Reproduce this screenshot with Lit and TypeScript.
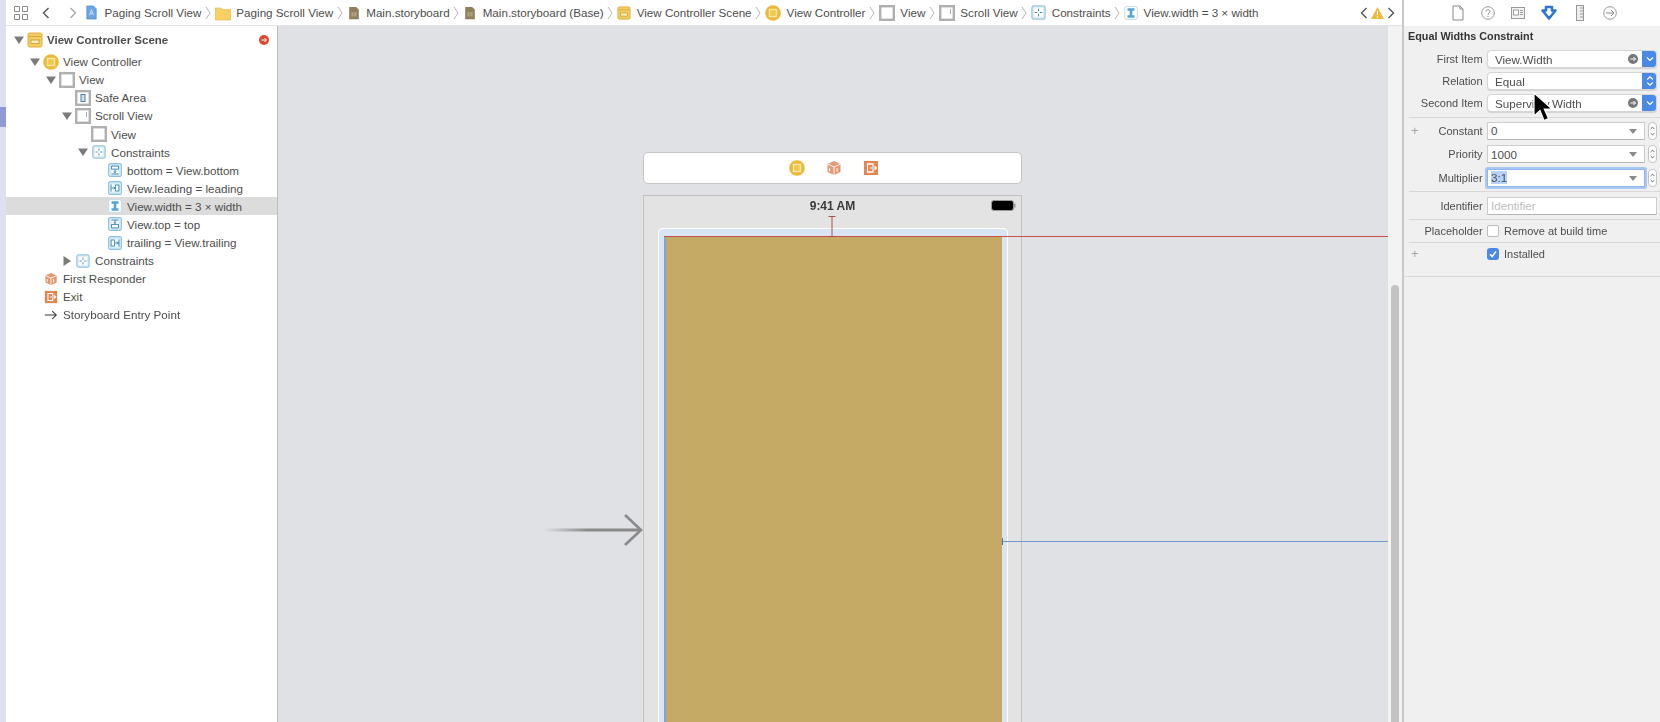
import { LitElement, html, css, svg, nothing } from "lit";
import { customElement } from "lit/decorators.js";

type IconName =
  | "view" | "scroll" | "safe" | "constraints" | "scene" | "vc" | "cube" | "exit" | "entry"
  | "cbottom" | "cleading" | "cwidth" | "ctop" | "ctrailing" | "doc" | "folder" | "story";

const iconBody = (name: IconName) => {
  switch (name) {
    case "view":
      return svg`<rect x="1.2" y="1.2" width="13.6" height="13.6" fill="#fff" stroke="#b0b0b0" stroke-width="2.4"/>`;
    case "scroll":
      return svg`<rect x="1.2" y="1.2" width="13.6" height="13.6" fill="#fff" stroke="#b0b0b0" stroke-width="2.4"/><path d="M11.5 4v5" stroke="#aaa" stroke-width="1"/>`;
    case "safe":
      return svg`<rect x="1.2" y="1.2" width="13.6" height="13.6" fill="#fff" stroke="#b0b0b0" stroke-width="2.4"/><rect x="6" y="4.5" width="4" height="7" fill="#cfe0ee" stroke="#4f7ea6"/>`;
    case "constraints":
      return svg`<rect x="1" y="1" width="14" height="14" rx="2" fill="#e0f0f8" stroke="#9cc6dc" stroke-width="1.4"/><rect x="3.5" y="3.5" width="9" height="9" fill="#fff"/><path d="M8 4v2.5M8 9.5V12M4 8h2.5M9.5 8H12" stroke="#2f7fb0"/>`;
    case "scene":
      return svg`<rect x="1" y="1" width="14" height="14" rx="1.5" fill="#f1cd62" stroke="#dfae3d"/><path d="M1.5 4.5h13" stroke="#d8ab3c"/><rect x="4" y="8" width="8" height="3.5" fill="#fbeeb8" stroke="#c49a35" stroke-width=".8"/>`;
    case "vc":
      return svg`<circle cx="8" cy="8" r="7.8" fill="#edb93a"/><rect x="4.5" y="4.5" width="7" height="7" fill="#f3c84f" stroke="#fde9a8" stroke-width="1.4"/>`;
    case "cube":
      return svg`<path d="M8 1l6.5 3v8L8 15l-6.5-3V4z" fill="#e29a76"/><path d="M1.5 4L8 7l6.5-3M8 7v8" fill="none" stroke="#fff" stroke-width=".9"/><path d="M3.6 8.2v3M11 8.2v3.6" stroke="#fff" stroke-width="1.1"/>`;
    case "exit":
      return svg`<rect x="1" y="1" width="14" height="14" fill="#e28550"/><path d="M10 6.8V4H4.5v8H10V9.2" fill="none" stroke="#fff" stroke-width="1.3"/><path d="M7 8h6.5M11.5 6l2 2-2 2" fill="none" stroke="#fff" stroke-width="1.2"/>`;
    case "entry":
      return svg`<path d="M1 8h13M9.5 3.5L14 8l-4.5 4.5" fill="none" stroke="#333" stroke-width="1.2"/>`;
    case "cbottom":
      return svg`${chip()}<rect x="4" y="3.5" width="8" height="9" fill="#fff"/><path d="M4 3.5h8v3.5H4zM8 7v4M6.4 9.5L8 11l1.6-1.5M4 12.5h8" fill="none" stroke="#2f7fb0"/>`;
    case "cleading":
      return svg`${chip()}<rect x="3.5" y="4" width="9" height="8" fill="#fff"/><path d="M3.5 4v8M8.5 4.5h4v7h-4zM4 8h4M6.5 6.4L8 8l-1.5 1.6" fill="none" stroke="#2f7fb0"/>`;
    case "cwidth":
      return svg`<rect x=".7" y=".7" width="14.6" height="14.6" rx="2.5" fill="#fff" stroke="#bcd8e6"/><path d="M4 2.5h8v3H9.5v5H12v3H4v-3h2.5v-5H4z" fill="#57a6d2"/>`;
    case "ctop":
      return svg`${chip()}<rect x="4" y="3.5" width="8" height="9" fill="#fff"/><path d="M4 3.5h8M8 3.5v4M6.4 6L8 7.5 9.6 6M4 8.5h8v4H4z" fill="none" stroke="#2f7fb0"/>`;
    case "ctrailing":
      return svg`${chip()}<rect x="3.5" y="4" width="9" height="8" fill="#fff"/><path d="M12.5 4v8M3.5 4.5h4v7h-4zM8 8h4M9.9 6.4L12 8l-2.1 1.6" fill="none" stroke="#2f7fb0"/>`;
    case "doc":
      return svg`<path d="M3 1h7l3 3v11H3z" fill="#6ba6e4" stroke="#4a86c8" stroke-width=".7"/><path d="M6 11l2-6 2 6M6.8 9h2.4" fill="none" stroke="#dceeff" stroke-width=".8"/>`;
    case "folder":
      return svg`<path d="M0 3h6l1.5 1.5H16V15H0z" fill="#f7cf62" stroke="#e5b94a" stroke-width=".6"/>`;
    case "story":
      return svg`<path d="M2.5 1h8l3 3v11h-11z" fill="#8f7f5c"/><rect x="5" y="7" width="6" height="5" fill="#b2a585"/><path d="M8 7v5" stroke="#8f7f5c"/>`;
  }
};

const chip = () =>
  svg`<rect x=".7" y=".7" width="14.6" height="14.6" rx="2" fill="#d5ebf6" stroke="#8fc0da" stroke-width="1.2"/>`;

const icon = (name: IconName, size = 14) =>
  html`<svg width=${size} height=${size} viewBox="0 0 16 16">${iconBody(name)}</svg>`;

const crumbs: { icon: IconName; label: string; size?: number }[] = [
  { icon: "doc", label: "Paging Scroll View", size: 15 },
  { icon: "folder", label: "Paging Scroll View", size: 16 },
  { icon: "story", label: "Main.storyboard", size: 14 },
  { icon: "story", label: "Main.storyboard (Base)", size: 14 },
  { icon: "scene", label: "View Controller Scene", size: 14 },
  { icon: "vc", label: "View Controller", size: 16 },
  { icon: "view", label: "View", size: 16 },
  { icon: "scroll", label: "Scroll View", size: 16 },
  { icon: "constraints", label: "Constraints", size: 15 },
  { icon: "cwidth", label: "View.width = 3 × width", size: 14 },
];

const tree: { d: number; icon: IconName; label: string; tri?: "open" | "closed"; sel?: boolean; size?: number }[] = [
  { d: 1, icon: "vc", label: "View Controller", tri: "open", size: 16 },
  { d: 2, icon: "view", label: "View", tri: "open", size: 16 },
  { d: 3, icon: "safe", label: "Safe Area", size: 16 },
  { d: 3, icon: "scroll", label: "Scroll View", tri: "open", size: 16 },
  { d: 4, icon: "view", label: "View", size: 16 },
  { d: 4, icon: "constraints", label: "Constraints", tri: "open" },
  { d: 5, icon: "cbottom", label: "bottom = View.bottom" },
  { d: 5, icon: "cleading", label: "View.leading = leading" },
  { d: 5, icon: "cwidth", label: "View.width = 3 × width", sel: true },
  { d: 5, icon: "ctop", label: "View.top = top" },
  { d: 5, icon: "ctrailing", label: "trailing = View.trailing" },
  { d: 3, icon: "constraints", label: "Constraints", tri: "closed" },
  { d: 1, icon: "cube", label: "First Responder" },
  { d: 1, icon: "exit", label: "Exit" },
  { d: 1, icon: "entry", label: "Storyboard Entry Point" },
];

const tri = (kind?: "open" | "closed") => {
  if (!kind) return html`<span class="tri"></span>`;
  return html`<svg class="tri" width="10" height="10" viewBox="0 0 10 10">
    <path d=${kind === "open" ? "M0 1.5h10L5 9z" : "M1.5 0v10L9 5z"} fill="#7b7b7b"/>
  </svg>`;
};

const chevron = html`<svg class="crumb-sep" width="6" height="14" viewBox="0 0 6 14">
  <path d="M1 1l4 6-4 6" fill="none" stroke="#b5b5b5"/>
</svg>`;

@customElement("app-root")
export class AppRoot extends LitElement {
  static styles = css`
    :host {
      display: block;
      width: 1660px;
      height: 722px;
      overflow: hidden;
      position: relative;
      background: #fff;
      font-family: "Liberation Sans", Arial, sans-serif;
      font-size: 11.65px;
      color: #4d4d4d;
    }
    .app {
      display: flex;
      height: 722px;
      filter: blur(0.45px);
    }
    .strip {
      width: 6px;
      flex: none;
      background: #dfe0ef;
    }
    .strip div {
      margin-top: 107px;
      height: 20px;
      background: #8e9bd6;
    }
    .main {
      width: 1397px;
      flex: none;
      display: flex;
      flex-direction: column;
    }
    .crumbs {
      height: 25px;
      flex: none;
      display: flex;
      align-items: center;
      background: #fff;
      border-bottom: 1px solid #e2e2e2;
      white-space: nowrap;
    }
    .grid-btn {
      margin-left: 8px;
    }
    .nav {
      display: block;
    }
    .nav.back {
      margin-left: 14px;
    }
    .nav.fwd {
      margin-left: 19px;
      margin-right: 7px;
    }
    .crumb {
      display: flex;
      align-items: center;
      gap: 5.5px;
    }
    .crumb-sep {
      margin: 0 3.75px;
      flex: none;
    }
    .issues {
      margin-left: auto;
      margin-right: 8px;
      display: flex;
      align-items: center;
      gap: 3px;
    }
    .body {
      flex: 1;
      display: flex;
      min-height: 0;
    }
    .outline {
      width: 271px;
      flex: none;
      background: #fff;
      border-right: 1px solid #bdbdbd;
      padding-top: 5px;
      box-sizing: content-box;
    }
    .scene-row {
      height: 18px;
      margin-bottom: 3.6px;
      font-weight: bold;
      font-size: 11.5px;
      display: flex;
      align-items: center;
      position: relative;
      padding-right: 8px;
    }
    .row {
      height: 18.1px;
      display: flex;
      align-items: center;
    }
    .row.sel {
      background: #dcdcdc;
    }
    .tri {
      width: 10px;
      flex: none;
      margin-right: 3px;
    }
    .row svg:not(.tri),
    .scene-row svg:not(.tri) {
      flex: none;
    }
    .ico {
      width: 16px;
      flex: none;
      display: flex;
      justify-content: center;
      margin-right: 4px;
    }
    .stop {
      margin-left: auto;
    }
    .canvas {
      flex: 1;
      position: relative;
      overflow: hidden;
      background: #e0e1e5;
      padding: 126px 0 0 365px;
    }
    .dock {
      width: 375px;
      height: 30px;
      padding-left: 2px;
      background: #fff;
      border: 1px solid #c5c5c5;
      border-radius: 5px;
      display: flex;
      align-items: center;
      justify-content: center;
      gap: 21px;
    }
    .phone {
      margin-top: 11px;
      width: 349px;
      height: 600px;
      background: #e3e3e3;
      border: 1px solid #c2c2c2;
      padding: 0 14px;
      box-sizing: content-box;
    }
    .status {
      height: 32px;
      display: flex;
      align-items: center;
      justify-content: center;
      font-weight: bold;
      font-size: 12px;
      color: #3a3a3a;
      position: relative;
      padding-bottom: 12px;
      box-sizing: border-box;
    }
    .battery {
      position: absolute;
      right: -9px;
      top: 4px;
    }
    .frame {
      width: 350px;
      background: #fff;
      border-radius: 5px 5px 0 0;
      padding: 1px 1px 0 1px;
      box-sizing: border-box;
      height: 560px;
    }
    .tint {
      background: #d9e5f5;
      height: 100%;
      padding: 7px 5px 0 5px;
      box-sizing: border-box;
      border-radius: 4px 4px 0 0;
    }
    .gold {
      height: 100%;
      background: #c4aa65;
      border-left: 2px solid #7ea5d6;
    }
    .arrow,
    .red-line,
    .blue-line,
    .ibeam {
      position: absolute;
    }
    .arrow {
      left: 266px;
      top: 487px;
    }
    .red-line {
      left: 386px;
      right: 0;
      top: 210px;
      height: 1px;
      background: #c8504a;
    }
    .blue-line {
      left: 724px;
      right: 0;
      top: 515px;
      height: 1px;
      background: #6f97c9;
    }
    .blue-line::before {
      content: "";
      position: absolute;
      left: 0;
      top: -3px;
      width: 1px;
      height: 7px;
      background: #56708f;
    }
    .ibeam {
      left: 550px;
      top: 190px;
    }
    .gutter {
      width: 15px;
      flex: none;
      background: #f3f3f3;
      padding: 259px 4px 0 3px;
      box-sizing: border-box;
    }
    .thumb {
      height: 100%;
      background: #c3c3c3;
      border-radius: 4px 4px 0 0;
    }
    .inspector {
      flex: 1;
      background: #f0f0f0;
      border-left: 2px solid #c9c9c9;
      min-width: 0;
      margin-left: -1px;
    }
    .tabs {
      height: 26px;
      background: #fff;
      display: flex;
      align-items: center;
      gap: 16px;
      padding-left: 47px;
    }
    .tabs svg {
      flex: none;
    }
    .title {
      height: 22px;
      line-height: 20px;
      padding-left: 4px;
      font-weight: bold;
      font-size: 10.8px;
      color: #333;
    }
    .sec {
      margin-left: 5px;
      border-bottom: 1px solid #d9d9d9;
    }
    .sec.s1 {
      padding-bottom: 2.5px;
    }
    .sec.s2 {
      padding: 1.3px 0 2px;
    }
    .sec.s3 {
      padding: 4.4px 0 4.5px;
    }
    .sec.s5 {
      margin-left: 0;
      padding: 0 0 10.7px 5px;
    }
    .field-row {
      display: flex;
      align-items: center;
      height: 22px;
    }
    .s2 .field-row {
      height: 23.5px;
    }
    .s3 .field-row {
      height: 18px;
    }
    .s4 .field-row {
      height: 21.8px;
    }
    .s5 .field-row {
      height: 22px;
    }
    .label {
      width: 73.6px;
      flex: none;
      margin-right: 4.4px;
      display: flex;
      align-items: center;
      justify-content: flex-end;
      white-space: nowrap;
      font-size: 11px;
    }
    .plus {
      margin-right: auto;
      margin-left: 2px;
      color: #a5a5a5;
      font-size: 13px;
    }
    .field {
      height: 18px;
      flex: 1;
      margin-right: 3px;
      background: #fff;
      border: 1px solid #cdcdcd;
      border-bottom-color: #b5b5b5;
      box-sizing: border-box;
      display: flex;
      align-items: center;
      padding-left: 7px;
      min-width: 0;
      position: relative;
    }
    .field.popup {
      border-radius: 4px;
      overflow: hidden;
      box-shadow: 0 1px 1px rgba(0, 0, 0, 0.12);
      border-color: #d5d5d5;
    }
    .field.combo {
      margin-right: 0;
      padding-left: 3px;
      border-radius: 1px;
    }
    .s3 .field.combo {
      margin-right: 3px;
    }
    .field.focus {
      border: 1px solid #8fb5ea;
      box-shadow: 0 0 0 2px #a8c8f2;
    }
    .placeholder {
      color: #bdbdbd;
    }
    .selected-text {
      background: #b5d2f7;
    }
    .popup-btn {
      position: absolute;
      right: -1px;
      top: -1px;
      bottom: -1px;
      width: 15px;
      background: #4a8ae6;
      display: flex;
      align-items: center;
      justify-content: center;
    }
    .go {
      position: absolute;
      right: 18px;
      top: 3px;
    }
    .caret {
      position: absolute;
      right: 7px;
      top: 6px;
    }
    .stepper {
      width: 9px;
      height: 18px;
      margin: 0 3px 0 3px;
      flex: none;
      background: #fff;
      border: 1px solid #c4c4c4;
      border-radius: 4px;
      box-sizing: border-box;
    }
    .check {
      display: flex;
      align-items: center;
      gap: 5px;
      font-size: 11px;
      white-space: nowrap;
    }
    .box {
      width: 12px;
      height: 12px;
      border: 1px solid #bdbdbd;
      border-radius: 2px;
      background: #fff;
      box-sizing: border-box;
      display: block;
    }
    .box.on {
      border: none;
      border-radius: 3px;
      background: #4a8ae6;
    }
    .cursor {
      position: absolute;
      left: 1531px;
      top: 91px;
    }
  `;

  private renderField(label: string, value: string, kind: "go" | "updown") {
    return html`<div class="field-row">
      <div class="label">${label}</div>
      <div class="field popup">
        ${value}
        ${kind === "go"
          ? html`<svg class="go" width="10" height="10" viewBox="0 0 10 10">
              <circle cx="5" cy="5" r="5" fill="#777"/>
              <path d="M2.5 5h5M5.5 3l2 2-2 2" fill="none" stroke="#fff"/>
            </svg>`
          : nothing}
        <span class="popup-btn">
          <svg width="8" height="12" viewBox="0 0 8 12">
            <path
              d=${kind === "go" ? "M1 4.5l3 3 3-3" : "M1.2 4.5L4 1.8l2.8 2.7M1.2 7.5L4 10.2l2.8-2.7"}
              fill="none"
              stroke="#fff"
              stroke-width="1.2"
            />
          </svg>
        </span>
      </div>
    </div>`;
  }

  private renderCombo(label: string, value: unknown, focus = false, plus = false) {
    return html`<div class="field-row">
      <div class="label">${plus ? html`<span class="plus">+</span>` : nothing}${label}</div>
      <div class="field combo ${focus ? "focus" : ""}">
        ${value}
        <svg class="caret" width="8" height="5" viewBox="0 0 8 5"><path d="M0 0h8L4 5z" fill="#8a8a8a"/></svg>
      </div>
      <svg class="stepper" viewBox="0 0 9 18">
        <path d="M2 6.5l2.5-2.5L7 6.5M2 11.5L4.5 14 7 11.5" fill="none" stroke="#444"/>
      </svg>
    </div>`;
  }

  render() {
    return html`<div class="app">
        <div class="strip"><div></div></div>
        <div class="main">
          <div class="crumbs">
            <svg class="grid-btn" width="14" height="14" viewBox="0 0 14 14">
              <path d="M.5.5h5v5h-5zM8.5.5h5v5h-5zM.5 8.5h5v5h-5zM8.5 8.5h5v5h-5z" fill="none" stroke="#888"/>
            </svg>
            <svg class="nav back" width="8" height="12" viewBox="0 0 8 12">
              <path d="M6.5 1l-5 5 5 5" fill="none" stroke="#555" stroke-width="1.4"/>
            </svg>
            <svg class="nav fwd" width="8" height="12" viewBox="0 0 8 12">
              <path d="M1.5 1l5 5-5 5" fill="none" stroke="#aaa" stroke-width="1.4"/>
            </svg>
            ${crumbs.map(
              (c, i) => html`<div class="crumb">${icon(c.icon, c.size)}<span>${c.label}</span></div>
                ${i < crumbs.length - 1 ? chevron : nothing}`
            )}
            <div class="issues">
              <svg width="8" height="12" viewBox="0 0 8 12">
                <path d="M6.5 1l-5 5 5 5" fill="none" stroke="#555" stroke-width="1.4"/>
              </svg>
              <svg width="13" height="12" viewBox="0 0 13 12">
                <path d="M6.5 0L13 12H0z" fill="#f0b93c"/>
                <path d="M6.5 4v4M6.5 9v1.5" stroke="#fff" stroke-width="1.2"/>
              </svg>
              <svg width="8" height="12" viewBox="0 0 8 12">
                <path d="M1.5 1l5 5-5 5" fill="none" stroke="#555" stroke-width="1.4"/>
              </svg>
            </div>
          </div>
          <div class="body">
            <div class="outline">
              <div class="scene-row" style="padding-left:8px">
                ${tri("open")}<span class="ico">${icon("scene", 16)}</span>View Controller Scene
                <svg class="stop" width="10" height="10" viewBox="0 0 10 10">
                  <circle cx="5" cy="5" r="5" fill="#d9492f"/>
                  <path d="M2.5 5h5M5.5 3l2 2-2 2" fill="none" stroke="#fff"/>
                </svg>
              </div>
              ${tree.map(
                (r) => html`<div class="row ${r.sel ? "sel" : ""}" style="padding-left:${8 + r.d * 16}px">
                  ${tri(r.tri)}<span class="ico">${icon(r.icon, r.size ?? 14)}</span>${r.label}
                </div>`
              )}
            </div>
            <div class="canvas">
              <div class="dock">
                ${icon("vc", 16)} ${icon("cube", 16)} ${icon("exit", 16)}
              </div>
              <div class="phone">
                <div class="status">
                  9:41 AM
                  <svg class="battery" width="25" height="11" viewBox="0 0 25 11">
                    <rect x=".5" y=".5" width="22" height="10" rx="2.5" fill="#000" stroke="#999"/>
                    <rect x="23" y="3.5" width="1.5" height="4" fill="#999"/>
                  </svg>
                </div>
                <div class="frame">
                  <div class="tint"><div class="gold"></div></div>
                </div>
              </div>
              <svg class="arrow" width="100" height="34" viewBox="0 0 100 34">
                <defs>
                  <linearGradient id="fade">
                    <stop offset="0" stop-color="#8a8a8a" stop-opacity="0"/>
                    <stop offset=".45" stop-color="#8a8a8a"/>
                  </linearGradient>
                </defs>
                <rect x="0" y="15.5" width="97" height="3" fill="url(#fade)"/>
                <path d="M81 2l16 15-16 15" fill="none" stroke="#8a8a8a" stroke-width="2.6"/>
              </svg>
              <div class="red-line"></div>
              <svg class="ibeam" width="8" height="21" viewBox="0 0 8 21">
                <path d="M.5.5h7M4 .5v20M.5 20.5h7" fill="none" stroke="#a84f4a"/>
              </svg>
              <div class="blue-line"></div>
            </div>
            <div class="gutter"><div class="thumb"></div></div>
          </div>
        </div>
        <div class="inspector">
          <div class="tabs">
            <svg width="14" height="16" viewBox="0 0 14 16"><path d="M2 1h7l3 3v11H2zM9 1v3h3" fill="none" stroke="#888"/></svg>
            <svg width="14" height="14" viewBox="0 0 14 14">
              <circle cx="7" cy="7" r="6.3" fill="none" stroke="#999"/>
              <path d="M5 5.5C5 3 9 3 9 5.5 9 7 7 7 7 9M7 10v1" fill="none" stroke="#888"/>
            </svg>
            <svg width="14" height="12" viewBox="0 0 14 12">
              <rect x=".5" y=".5" width="13" height="11" fill="#f4f4f4" stroke="#999"/>
              <rect x="2.5" y="3" width="5" height="5" fill="#fff" stroke="#888" stroke-width=".8"/>
              <path d="M9 3.5h3M9 5.5h3M9 7.5h3" stroke="#999"/>
            </svg>
            <svg width="16" height="16" viewBox="0 0 16 16">
              <path d="M5 2h6v3.5h3.5L8 13.5 1.5 5.5H5z" fill="#fff" stroke="#2e75cf" stroke-width="2.6" stroke-linejoin="round"/>
            </svg>
            <svg width="14" height="16" viewBox="0 0 14 16">
              <rect x="3.5" y=".5" width="7" height="15" fill="#eee" stroke="#999"/>
              <path d="M7 3h3.5M7 6h3.5M7 9h3.5M7 12h3.5" stroke="#999"/>
            </svg>
            <svg width="14" height="14" viewBox="0 0 14 14">
              <circle cx="7" cy="7" r="6.3" fill="none" stroke="#999"/>
              <path d="M3 7h8M8 4l3 3-3 3" fill="none" stroke="#888"/>
            </svg>
          </div>
          <div class="title">Equal Widths Constraint</div>
          <div class="sec s1">
            ${this.renderField("First Item", "View.Width", "go")}
            ${this.renderField("Relation", "Equal", "updown")}
            ${this.renderField("Second Item", "Superview.Width", "go")}
          </div>
          <div class="sec s2">
            ${this.renderCombo("Constant", "0", false, true)}
            ${this.renderCombo("Priority", "1000")}
            ${this.renderCombo("Multiplier", html`<span class="selected-text">3:1</span>`, true)}
          </div>
          <div class="sec s3">
            <div class="field-row">
              <div class="label">Identifier</div>
              <div class="field combo"><span class="placeholder">Identifier</span></div>
            </div>
          </div>
          <div class="sec s4">
            <div class="field-row">
              <div class="label">Placeholder</div>
              <label class="check"><span class="box"></span>Remove at build time</label>
            </div>
          </div>
          <div class="sec s5">
            <div class="field-row">
              <div class="label"><span class="plus">+</span></div>
              <label class="check">
                <svg class="box on" viewBox="0 0 12 12">
                  <path d="M3 6.2l2.2 2.3L9 3.5" fill="none" stroke="#fff" stroke-width="1.5"/>
                </svg>
                Installed
              </label>
            </div>
          </div>
        </div>
      </div>
      <svg class="cursor" width="24" height="34" viewBox="0 0 24 34">
        <path d="M3 2v23l6-5.5 4 10 4.5-2-4.2-9.5H21z" fill="#000" stroke="#fff" stroke-width="1.2"/>
      </svg>`;
  }
}
